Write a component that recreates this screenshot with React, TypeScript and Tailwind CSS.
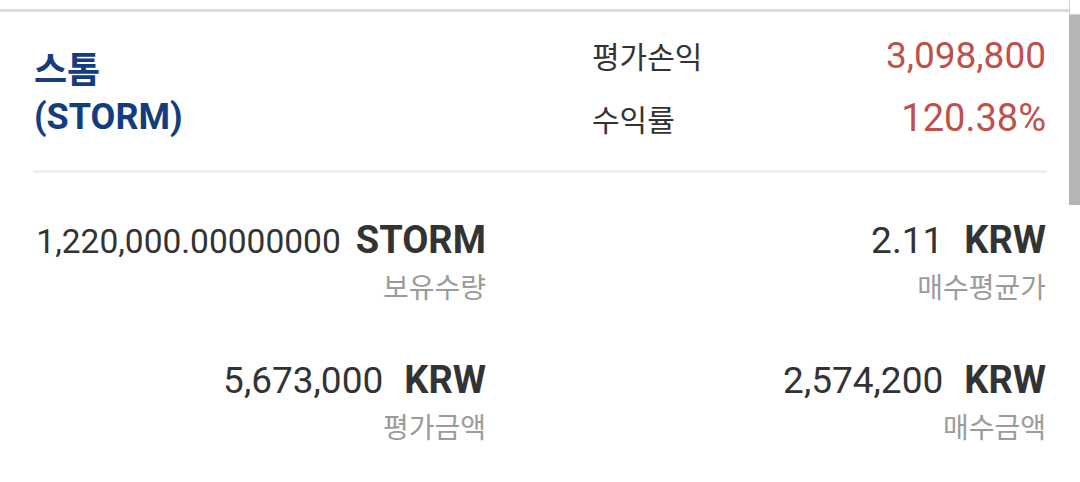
import React from 'react';

type Cell = {
  value: string;
  unit: string;
  label: string;
  small?: boolean;
};

const cells: Cell[] = [
  { value: '1,220,000.00000000', unit: 'STORM', label: '보유수량', small: true },
  { value: '2.11', unit: 'KRW', label: '매수평균가' },
  { value: '5,673,000', unit: 'KRW', label: '평가금액' },
  { value: '2,574,200', unit: 'KRW', label: '매수금액' },
];

const HoldingCell: React.FC<{ cell: Cell }> = ({ cell }) => (
  <div className="flex flex-col items-end">
    <div className="flex items-baseline h-[40px] leading-[40px]">
      <span className={cell.small ? 'text-[33.5px] text-[#333]' : 'text-[37px] text-[#333]'}>{cell.value}</span>
      <span className={`text-[38px] font-bold text-[#333] ${cell.small ? 'ml-[15px]' : 'ml-[21px]'}`}>{cell.unit}</span>
    </div>
    <div className="mt-[12px] text-[28px] leading-[34px] text-[#9b9b9b]">{cell.label}</div>
  </div>
);

export default function App() {
  return (
    <div className="relative w-[1080px] h-[482px] overflow-hidden bg-white font-['Roboto','Noto_Sans_CJK_KR',sans-serif]">
      {/* top border of the card */}
      <div className="pt-[9px] pr-[11px]">
        <div className="h-[3px] bg-[#dcdcdc]" />
      </div>

      <div className="px-[34px]">
        {/* header: coin name + profit */}
        <div className="flex justify-between h-[158px]">
          <div className="pt-[36px] text-[36px] leading-[46px] font-bold text-[#143d80]">
            <div>스톰</div>
            <div>(STORM)</div>
          </div>
          <div className="w-[454px] pt-[21px] flex flex-col gap-y-[16px]">
            <div className="flex justify-between items-baseline h-[46px] leading-[46px]">
              <span className="text-[30px] text-[#333]">평가손익</span>
              <span className="text-[37px] text-[#c14f4a]">3,098,800</span>
            </div>
            <div className="flex justify-between items-baseline h-[46px] leading-[46px]">
              <span className="text-[30px] text-[#333]">수익률</span>
              <span className="text-[38px] text-[#c14f4a]">120.38%</span>
            </div>
          </div>
        </div>

        <div className="h-[3px] bg-[#efefef]" />

        {/* holdings detail */}
        <div className="pt-[47px] grid grid-cols-2 gap-x-[108px] gap-y-[54px]">
          {cells.map((c, i) => (
            <HoldingCell key={i} cell={c} />
          ))}
        </div>
      </div>

      {/* scrollbar overlay */}
      <div className="absolute top-[-8px] right-[-2px] w-[13px] h-[23px] rounded-tl-[9px] border border-[#cfcfcf] bg-white" />
      <div className="absolute top-[15px] right-0 w-[11px] h-[190px] bg-[#b5b5b5]" />
    </div>
  );
}
